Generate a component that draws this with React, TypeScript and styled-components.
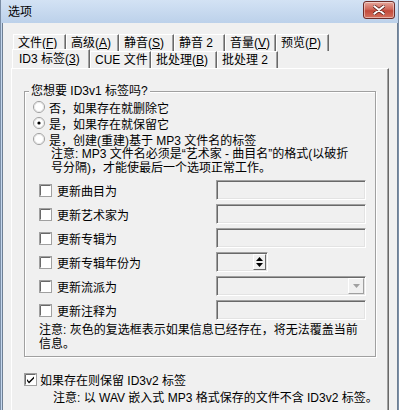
import React from "react";
import styled, { createGlobalStyle } from "styled-components";

const GlobalStyle = createGlobalStyle`
  html, body {
    margin: 0;
    padding: 0;
    background: #ffffff;
  }
  body {
    font-family: "Liberation Sans", "Noto Sans CJK SC", sans-serif;
    font-size: 12px;
    color: #000;
  }
`;

const Window = styled.div`
  box-sizing: border-box;
  width: 399px;
  height: 410px;
  display: flex;
  flex-direction: column;
  background: #c4d7ee;
  border-left: 1px solid #7b8ea6;
  border-right: 1px solid #7b8ea6;
  overflow: hidden;
`;

const TitleBar = styled.div`
  height: 23px;
  flex: none;
  display: flex;
  align-items: center;
  justify-content: space-between;
  padding: 0 3px 0 7px;
  background: linear-gradient(#d3e2f4, #bcd1ea);
`;

const Title = styled.span`
  font-size: 12px;
  line-height: 14px;
  color: #000;
`;

const CloseButton = styled.div`
  width: 30px;
  height: 16px;
  margin-top: -3px;
  display: flex;
  align-items: center;
  justify-content: center;
  border: 1px solid #6d2c28;
  border-radius: 3px;
  background: linear-gradient(#e5a79c, #d0685a 45%, #c24a3b 55%, #d5725f);
  box-shadow: inset 0 0 0 1px rgba(255, 255, 255, 0.45);
`;

const Client = styled.div`
  flex: 1;
  display: flex;
  flex-direction: column;
  min-height: 0;
  margin-left: 1px;
  background: #f0f0f0;
  border-left: 1px solid #6e7f93;
  border-right: 1px solid #6e7f93;
  padding: 11px 8px 0 8px;
`;

const TabRow = styled.div<{ $front?: boolean }>`
  display: flex;
  height: 17px;
  margin-left: 2px;
  position: relative;
  z-index: ${(p) => (p.$front ? 2 : 1)};
`;

const Tab = styled.div<{ $w: number; $active?: boolean }>`
  box-sizing: border-box;
  width: ${(p) => p.$w}px;
  height: ${(p) => (p.$active ? 19 : 17)}px;
  margin-top: ${(p) => (p.$active ? -2 : 0)}px;
  margin-left: ${(p) => (p.$active ? -1 : 0)}px;
  padding-left: ${(p) => (p.$active ? 6 : 4)}px;
  padding-top: ${(p) => (p.$active ? 2 : 0)}px;
  display: flex;
  align-items: ${(p) => (p.$active ? "flex-start" : "center")};
  white-space: nowrap;
  line-height: 14px;
  background: #f0f0f0;
  border-top: 1px solid #ffffff;
  border-left: 1px solid #ffffff;
  border-right: 1px solid #696969;
  box-shadow: inset -1px 0 0 #a0a0a0;
`;

const Panel = styled.div`
  flex: 1;
  position: relative;
  z-index: 1;
  display: flex;
  flex-direction: column;
  background: #f0f0f0;
  border-top: 1px solid #ffffff;
  border-left: 1px solid #ffffff;
  border-right: 1px solid #696969;
  box-shadow: inset -1px 0 0 #a0a0a0;
  padding: 14px 0 0 12px;
`;

const GroupBox = styled.fieldset`
  box-sizing: border-box;
  width: 352px;
  margin: 0;
  padding: 0 0 5px 0;
  border: 1px solid #a0a0a0;
  box-shadow: inset 1px 1px 0 #ffffff, 1px 1px 0 #ffffff;
`;

const Legend = styled.legend`
  margin-left: 4px;
  padding: 0 2px;
  line-height: 16px;
  background: #f0f0f0;
`;

const RadioRow = styled.div`
  display: flex;
  align-items: center;
  gap: 4px;
  height: 16px;
  padding-left: 8px;
  white-space: nowrap;
`;

const Note = styled.div<{ $indent: number; $top?: number; $lh?: number }>`
  margin-left: ${(p) => p.$indent}px;
  margin-top: ${(p) => p.$top ?? 0}px;
  line-height: ${(p) => p.$lh ?? 13.5}px;
  white-space: nowrap;
`;

const FieldGrid = styled.div`
  display: grid;
  grid-template-columns: 177px 150px;
  grid-auto-rows: 24px;
  align-items: center;
  margin-top: 3px;
  padding-left: 14px;
`;

const CheckLabel = styled.label`
  display: flex;
  align-items: center;
  gap: 5px;
  white-space: nowrap;
`;

const Sunken = styled.div<{ $w?: number }>`
  box-sizing: border-box;
  width: ${(p) => (p.$w ? `${p.$w}px` : "100%")};
  height: 20px;
  display: flex;
  justify-content: flex-end;
  align-items: center;
  padding-right: 1px;
  background: #f0f0f0;
  border-top: 1px solid #a0a0a0;
  border-left: 1px solid #a0a0a0;
  border-bottom: 1px solid #ffffff;
  border-right: 1px solid #ffffff;
  box-shadow: inset 1px 1px 0 #696969, inset -1px -1px 0 #e3e3e3;
`;

const SpinButton = styled.div`
  box-sizing: border-box;
  width: 13px;
  height: 16px;
  display: flex;
  flex-direction: column;
  align-items: center;
  justify-content: center;
  gap: 2px;
  background: #f0f0f0;
  border-top: 1px solid #ffffff;
  border-left: 1px solid #ffffff;
  border-right: 1px solid #696969;
  border-bottom: 1px solid #696969;
`;

const DropButton = styled.div`
  box-sizing: border-box;
  width: 16px;
  height: 16px;
  display: flex;
  align-items: center;
  justify-content: center;
  background: #f0f0f0;
  border-top: 1px solid #ffffff;
  border-left: 1px solid #ffffff;
  border-right: 1px solid #a0a0a0;
  border-bottom: 1px solid #a0a0a0;
`;

const BottomRow = styled.label`
  display: flex;
  align-items: center;
  gap: 3px;
  height: 16px;
  margin-top: 14px;
  white-space: nowrap;
`;

const Key = styled.span`
  text-decoration: underline;
`;

function Radio({ checked }: { checked?: boolean }) {
  return (
    <svg width="12" height="12" viewBox="0 0 12 12">
      <circle cx="6" cy="6" r="5.5" fill="#ffffff" stroke="#9c9c9c" />
      <circle cx="6" cy="6" r="4.5" fill="none" stroke="#e6e6e6" />
      {checked && <circle cx="6" cy="6" r="1.6" fill="#000" />}
    </svg>
  );
}

function Check({ checked }: { checked?: boolean }) {
  return (
    <svg width="13" height="13" viewBox="0 0 13 13">
      <rect x="0.5" y="0.5" width="12" height="12" fill="#ffffff" stroke="#a0a0a0" />
      <path d="M1.5 11.5V1.5H11.5" fill="none" stroke="#696969" />
      {checked && (
        <path d="M3 6 L5 8.5 L10 3.5 L10 5.5 L5 10.5 L3 8 Z" fill="#000" />
      )}
    </svg>
  );
}

const tabsBack = [
  { w: 53, label: <>文件(<Key>F</Key>)</> },
  { w: 53, label: <>高级(<Key>A</Key>)</> },
  { w: 55, label: <>静音(<Key>S</Key>)</> },
  { w: 51, label: <>静音 2</> },
  { w: 51, label: <>音量(<Key>V</Key>)</> },
  { w: 53, label: <>预览(<Key>P</Key>)</> },
];

const tabsFront = [
  { w: 78, label: <>ID3 标签(<Key>3</Key>)</>, active: true },
  { w: 61, label: <>CUE 文件</> },
  { w: 66, label: <>批处理(<Key>B</Key>)</> },
  { w: 61, label: <>批处理 2</> },
];

const fields: { label: string; kind: "text" | "spin" | "combo" }[] = [
  { label: "更新曲目为", kind: "text" },
  { label: "更新艺术家为", kind: "text" },
  { label: "更新专辑为", kind: "text" },
  { label: "更新专辑年份为", kind: "spin" },
  { label: "更新流派为", kind: "combo" },
  { label: "更新注释为", kind: "text" },
];

function Field({ kind }: { kind: "text" | "spin" | "combo" }) {
  if (kind === "spin") {
    return (
      <Sunken $w={52}>
        <SpinButton>
          <svg width="7" height="4" viewBox="0 0 7 4">
            <path d="M0 4 L3.5 0 L7 4 Z" fill="#000" />
          </svg>
          <svg width="7" height="4" viewBox="0 0 7 4">
            <path d="M0 0 L3.5 4 L7 0 Z" fill="#000" />
          </svg>
        </SpinButton>
      </Sunken>
    );
  }
  if (kind === "combo") {
    return (
      <Sunken>
        <DropButton>
          <svg width="7" height="4" viewBox="0 0 7 4">
            <path d="M0 0 L3.5 4 L7 0 Z" fill="#a0a0a0" />
          </svg>
        </DropButton>
      </Sunken>
    );
  }
  return <Sunken />;
}

export default function App() {
  return (
    <>
      <GlobalStyle />
      <Window>
        <TitleBar>
          <Title>选项</Title>
          <CloseButton>
            <svg width="12" height="10" viewBox="0 0 12 10">
              <path
                d="M1 1 L11 9 M11 1 L1 9"
                stroke="#5a1f1a"
                strokeWidth="3.4"
                strokeLinecap="round"
              />
              <path
                d="M1.3 1.2 L10.7 8.8 M10.7 1.2 L1.3 8.8"
                stroke="#ffffff"
                strokeWidth="2"
                strokeLinecap="round"
              />
            </svg>
          </CloseButton>
        </TitleBar>
        <Client>
          <TabRow>
            {tabsBack.map((t, i) => (
              <Tab key={i} $w={t.w}>
                {t.label}
              </Tab>
            ))}
          </TabRow>
          <TabRow $front>
            {tabsFront.map((t, i) => (
              <Tab key={i} $w={t.w} $active={t.active}>
                {t.label}
              </Tab>
            ))}
          </TabRow>
          <Panel>
            <GroupBox>
              <Legend>您想要 ID3v1 标签吗?</Legend>
              <RadioRow>
                <Radio />
                否，如果存在就删除它
              </RadioRow>
              <RadioRow>
                <Radio checked />
                是，如果存在就保留它
              </RadioRow>
              <RadioRow>
                <Radio />
                是，创建(重建)基于 MP3 文件名的标签
              </RadioRow>
              <Note $indent={26} $top={1}>
                注意: MP3 文件名必须是“艺术家 - 曲目名”的格式(以破折
                <br />
                号分隔)，才能使最后一个选项正常工作。
              </Note>
              <FieldGrid>
                {fields.map((f) => (
                  <React.Fragment key={f.label}>
                    <CheckLabel>
                      <Check />
                      {f.label}
                    </CheckLabel>
                    <Field kind={f.kind} />
                  </React.Fragment>
                ))}
              </FieldGrid>
              <Note $indent={14} $top={2}>
                注意: 灰色的复选框表示如果信息已经存在，将无法覆盖当前
                <br />
                信息。
              </Note>
            </GroupBox>
            <BottomRow>
              <Check checked />
              如果存在则保留 ID3v2 标签
            </BottomRow>
            <Note $indent={29} $top={4} $lh={14}>
              注意: 以 WAV 嵌入式 MP3 格式保存的文件不含 ID3v2 标签。
            </Note>
          </Panel>
        </Client>
      </Window>
    </>
  );
}
